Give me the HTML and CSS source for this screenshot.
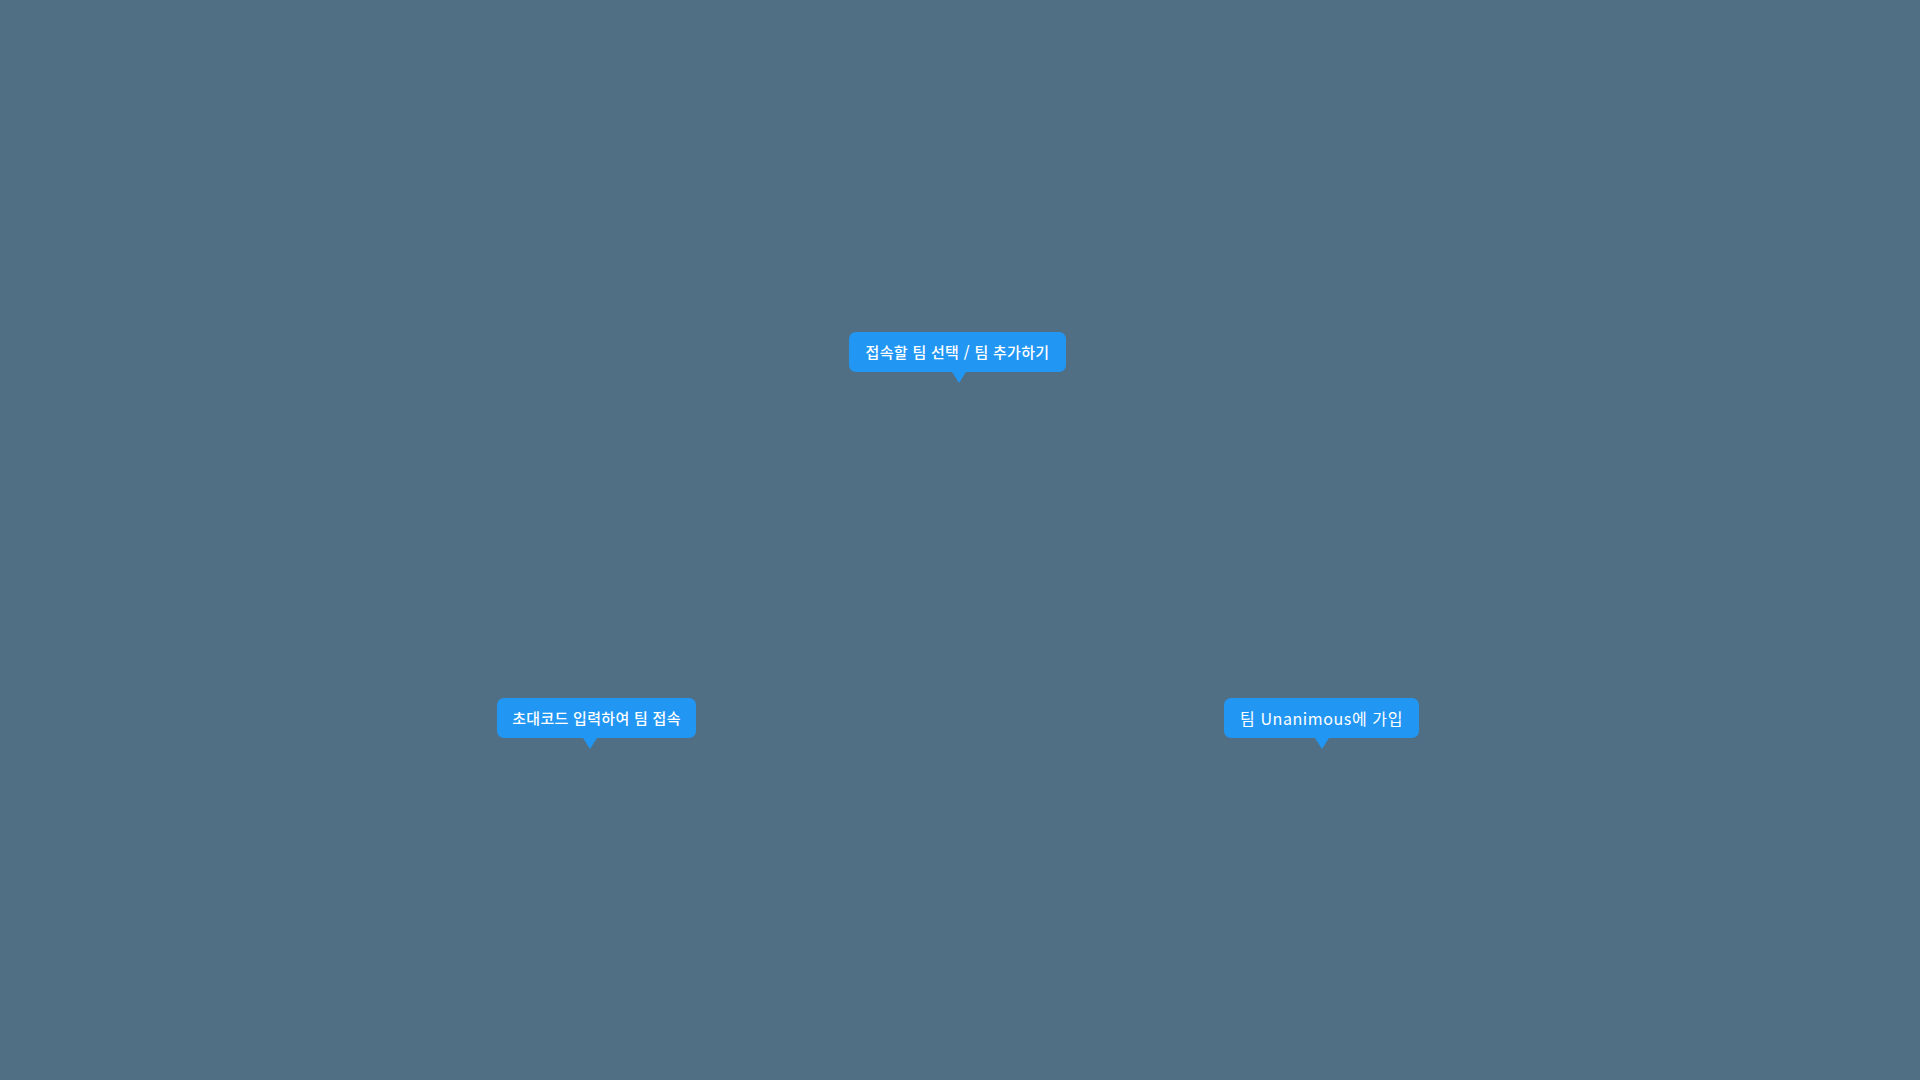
FILE: index.html
```html
<!DOCTYPE html>
<html lang="ko">
<head>
    <meta charset="UTF-8">
    <meta name="viewport" content="width=device-width, initial-scale=1.0">
    <title>Onboarding Tips</title>
    <link rel="stylesheet" href="styles.css">
</head>
<body>
    <div class="stage">
        <div class="tip tip-team">
            <span class="tip-text tip-bold">접속할 팀 선택 / 팀 추가하기</span>
            <span class="tip-arrow"></span>
        </div>
        <div class="tip tip-invite">
            <span class="tip-text tip-bold">초대코드 입력하여 팀 접속</span>
            <span class="tip-arrow"></span>
        </div>
        <div class="tip tip-join">
            <span class="tip-text tip-latin">팀 Unanimous에 가입</span>
            <span class="tip-arrow"></span>
        </div>
    </div>
</body>
</html>
```

FILE: styles.css
```css
html, body {
    margin: 0;
    padding: 0;
    height: 100%;
}

body {
    background-color: #506f85;
    font-family: 'Noto Sans CJK KR', 'Noto Sans', sans-serif;
}

.stage {
    position: relative;
    width: 100%;
    height: 100vh;
    overflow: hidden;
}

/* tooltips float over the canvas */
.tip {
    position: absolute;
    height: 40px;
    box-sizing: border-box;
    display: flex;
    align-items: center;
    justify-content: center;
    background-color: #2196f3;
    border-radius: 7px;
    color: #ffffff;
    font-size: 15px;
    white-space: nowrap;
}

.tip-text {
    line-height: 1;
    margin-top: -1px;
}

.tip-bold {
    font-weight: 500;
    letter-spacing: 0.3px;
}

.tip-latin {
    font-weight: 400;
    letter-spacing: 0.6px;
    font-size: 16px;
}

.tip-arrow {
    position: absolute;
    top: 40px;
    width: 0;
    height: 0;
    border-left: 7px solid transparent;
    border-right: 7px solid transparent;
    border-top: 11px solid #2196f3;
}

.tip-team {
    left: 849px;
    top: 332px;
    width: 217px;
}

.tip-team .tip-arrow {
    left: 103px;
}

.tip-invite {
    left: 497px;
    top: 698px;
    width: 199px;
}

.tip-invite .tip-arrow {
    left: 86px;
}

.tip-join {
    left: 1224px;
    top: 698px;
    width: 195px;
}

.tip-join .tip-arrow {
    left: 91px;
}
```
